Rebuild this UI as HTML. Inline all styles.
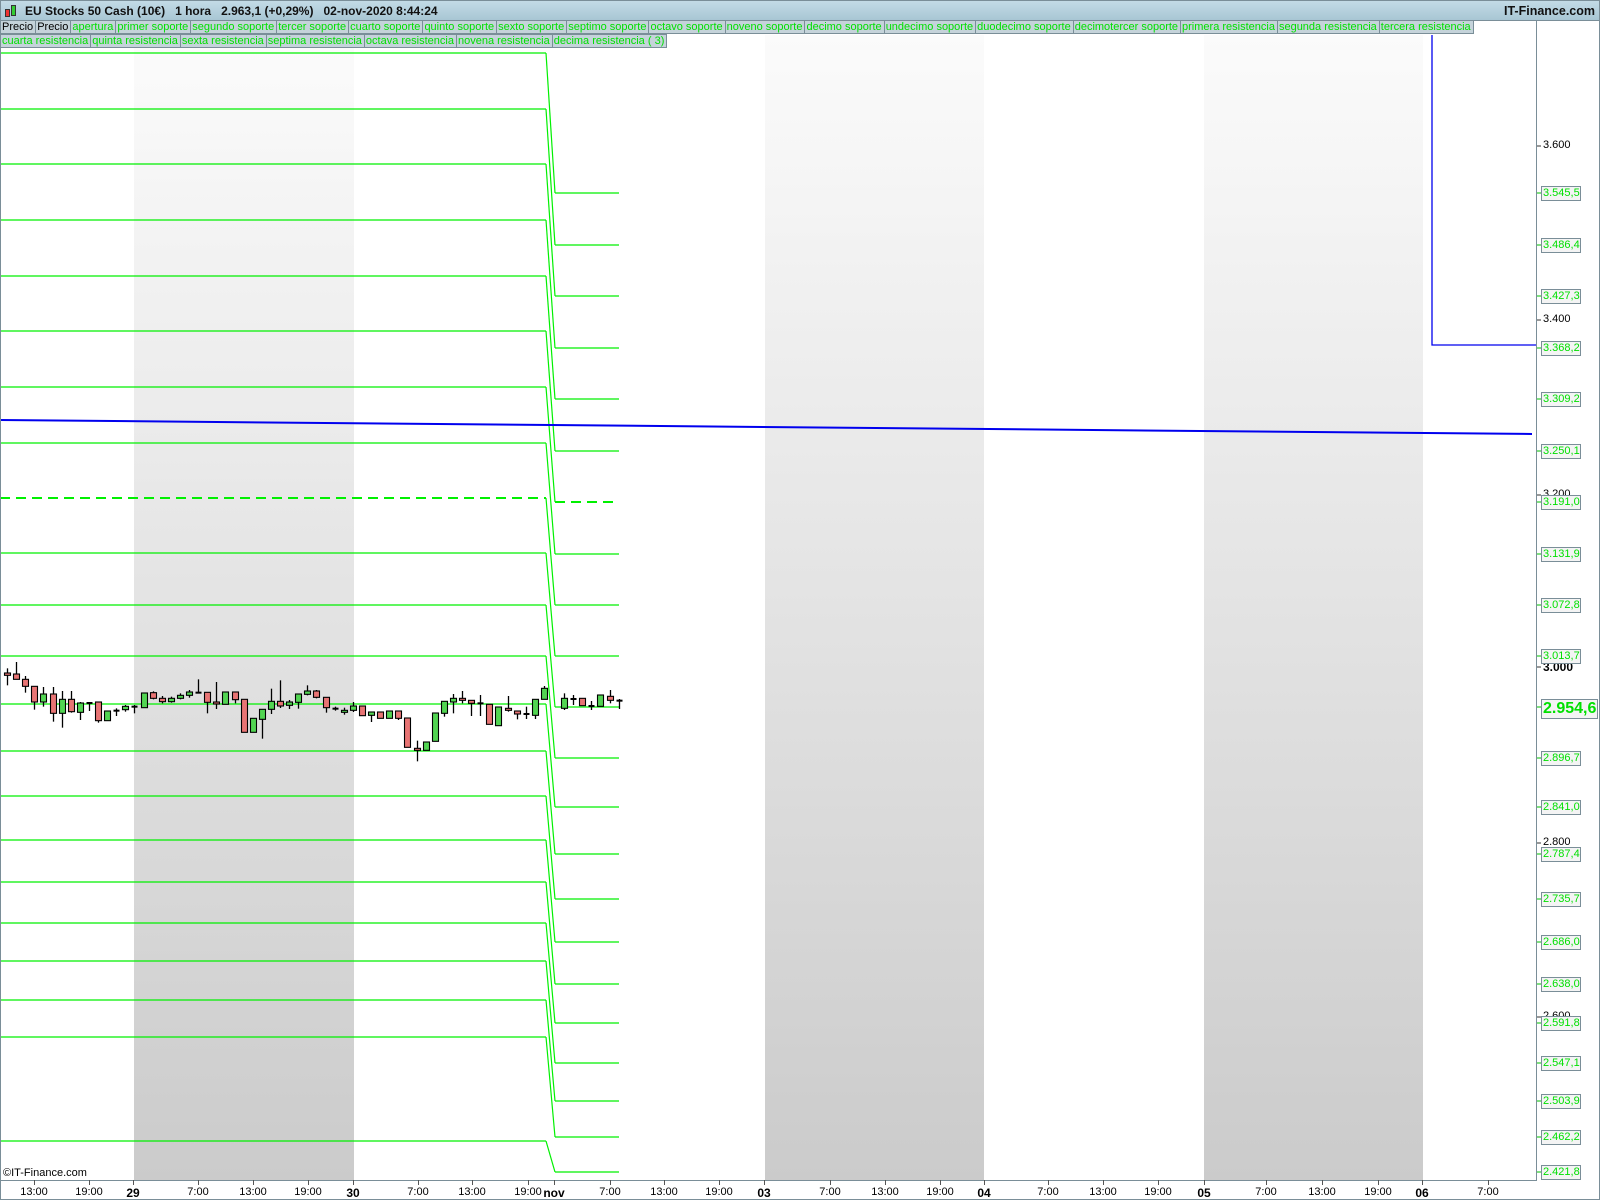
<!DOCTYPE html>
<html><head><meta charset="utf-8"><style>
*{margin:0;padding:0;box-sizing:border-box}
body{width:1600px;height:1200px;overflow:hidden;background:#fff;font-family:"Liberation Sans",sans-serif;position:relative}
#hdr{position:absolute;left:0;top:0;width:1600px;height:21px;background:linear-gradient(#c3dbe6,#a8c6d4);border:1px solid #7a8e98;font-weight:bold;font-size:12px;line-height:19px;color:#111}
#hdr .t{position:absolute;left:24px;top:1px;white-space:pre}
#hdr .r{position:absolute;right:4px;top:1px;font-size:12.5px}
.row{position:absolute;left:0;display:flex;height:14px}
.row span{display:block;border:1px solid #7a8e98;background:#c5d3da;color:#00e000;font-size:11px;line-height:12px;padding:0 2px 0 1px;margin-right:-1px;white-space:nowrap}
.row span.k{color:#000}
.lab{position:absolute;left:1541px;width:40px;height:15px;border:1px solid #7a8e98;background:#f4f4f4;color:#00e000;font-size:11px;line-height:13px;padding-left:1px}
.tk{position:absolute;left:1543px;font-size:11px;color:#000}
.xl{position:absolute;top:1186px;font-size:11px;color:#000;transform:translateX(-50%)}
.xl.b{font-weight:bold;font-size:12px}
</style></head><body>
<svg width="1600" height="1200" style="position:absolute;left:0;top:0">
<defs><linearGradient id="g" x1="0" y1="0" x2="0" y2="1"><stop offset="0" stop-color="#fbfbfb"/><stop offset="1" stop-color="#cbcbcb"/></linearGradient></defs>
<rect x="134" y="48" width="220" height="1132" fill="url(#g)"/>
<rect x="765" y="35" width="219" height="1145" fill="url(#g)"/>
<rect x="1204" y="35" width="219" height="1145" fill="url(#g)"/>
<g id="lv"></g>
<line x1="0" y1="420" x2="1532" y2="434" stroke="#0000ee" stroke-width="2"/>
<polyline points="1432,35 1432,345 1537,345" fill="none" stroke="#0000ee" stroke-width="1.3"/>
<g id="cd"></g>
<line x1="1536.5" y1="21" x2="1536.5" y2="1180" stroke="#7a8e98"/>
<line x1="0" y1="1180.5" x2="1537" y2="1180.5" stroke="#7a8e98"/>
<line x1="0.5" y1="21" x2="0.5" y2="1200" stroke="#7a8e98"/>
<line x1="0" y1="1199.5" x2="1600" y2="1199.5" stroke="#7a8e98"/>
<line x1="1599.5" y1="0" x2="1599.5" y2="1200" stroke="#7a8e98"/>
<g id="tx"></g>
</svg>
<div id="hdr"><span class="t">EU Stocks 50 Cash (10€)   1 hora   2.963,1 (+0,29%)   02-nov-2020 8:44:24</span><span class="r">IT-Finance.com</span>
<svg width="14" height="16" style="position:absolute;left:3px;top:2px"><rect x="1.5" y="6.5" width="4" height="7" fill="#e33" stroke="#333"/><rect x="7.5" y="2.5" width="4" height="10" fill="#3c3" stroke="#333"/></svg></div>
<div class="row" style="top:20px"><span class="k">Precio</span><span class="k">Precio</span><span>apertura</span><span>primer soporte</span><span>segundo soporte</span><span>tercer soporte</span><span>cuarto soporte</span><span>quinto soporte</span><span>sexto soporte</span><span>septimo soporte</span><span>octavo soporte</span><span>noveno soporte</span><span>decimo soporte</span><span>undecimo soporte</span><span>duodecimo soporte</span><span>decimotercer soporte</span><span>primera resistencia</span><span>segunda resistencia</span><span>tercera resistencia</span></div>
<div class="row" style="top:34px"><span>cuarta resistencia</span><span>quinta resistencia</span><span>sexta resistencia</span><span>septima resistencia</span><span>octava resistencia</span><span>novena resistencia</span><span>decima resistencia ( 3)</span></div>
<div class="tk" style="top:139px">3.600</div>
<div class="tk" style="top:313px">3.400</div>
<div class="tk" style="top:488px">3.200</div>
<div class="tk" style="top:660px;font-weight:bold;font-size:12px">3.000</div>
<div class="tk" style="top:836px">2.800</div>
<div class="tk" style="top:1010px">2.600</div>
<div id="labs"></div>
<div class="lab" style="top:699px;width:57px;height:20px;font-size:16px;font-weight:bold;line-height:18px">2.954,6</div>
<div style="position:absolute;left:3px;top:1167px;font-size:11px">©IT-Finance.com</div>
<div id="xls"></div>
<script>
var L=[53,109,164,220,276,331,387,443,498,553,605,656,704,751,796,840,882,923,961,1000,1037,1141];
var R=[193,245,296,348,399,451,502,554,605,656,707,758,807,854,899,942,984,1023,1063,1101,1137,1172];
var V=["3.545,5","3.486,4","3.427,3","3.368,2","3.309,2","3.250,1","3.191,0","3.131,9","3.072,8","3.013,7",null,"2.896,7","2.841,0","2.787,4","2.735,7","2.686,0","2.638,0","2.591,8","2.547,1","2.503,9","2.462,2","2.421,8"];
var s='',lb='',tk='';
for(var i=0;i<L.length;i++){
var dl=(i==8)?' stroke-dasharray="10,6" stroke-width="2"':' stroke-width="1.2"';
var dr=(i==6)?' stroke-dasharray="10,6" stroke-width="2"':' stroke-width="1.2"';
s+='<line x1="0" y1="'+L[i]+'" x2="546" y2="'+L[i]+'" stroke="#00f000"'+dl+'/>';
s+='<line x1="546" y1="'+L[i]+'" x2="555" y2="'+R[i]+'" stroke="#00f000" stroke-width="1.2"/>';
s+='<line x1="555" y1="'+R[i]+'" x2="619" y2="'+R[i]+'" stroke="#00f000"'+dr+'/>';
if(V[i]){lb+='<div class="lab" style="top:'+(R[i]-7)+'px">'+V[i]+'</div>';}
tk+='<line x1="1537" y1="'+R[i]+'" x2="1541" y2="'+R[i]+'" stroke="#00c000"/>';}
[146,320,495,667,843,1017].forEach(function(y){tk+='<line x1="1537" y1="'+y+'" x2="1541" y2="'+y+'" stroke="#333"/>';});
document.getElementById('lv').innerHTML=s;document.getElementById('labs').innerHTML=lb;
var C=[['r',99,106,85,136],['r',102,118,66,118],['r',118,139,108,158],['r',139,186,139,209],['g',162,186,141,200],['r',162,220,141,245],['g',178,220,153,263],['r',178,215,153,218],['g',189,217,186,240],['k',189,189,186,213],['r',186,242,186,248],['g',213,242,213,242],['k',212,212,205,228],['g',199,209,195,215],['k',200,200,195,220],['g',159,203,159,203],['r',158,175,154,178],['r',175,185,168,190],['g',175,185,170,188],['g',166,175,160,178],['g',156,166,150,173],['k',158,158,118,160],['r',157,187,157,220],['r',186,190,126,207],['g',156,193,156,193],['r',156,179,156,190],['r',178,277,178,277],['g',235,277,235,277],['g',208,238,208,296],['g',184,208,146,222],['r',184,198,121,204],['g',186,196,180,207],['g',162,187,162,206],['g',153,163,136,166],['r',153,172,150,175],['r',172,203,172,218],['k',206,206,200,212],['g',211,216,203,224],['g',198,211,186,216],['r',198,227,198,227],['g',216,226,216,246],['r',216,235,216,235],['g',213,235,213,235],['r',213,235,213,240],['r',234,322,234,322],['r',325,331,302,364],['g',306,331,306,331],['g',219,304,219,304],['g',184,220,184,230],['g',175,186,162,220],['r',175,181,153,190],['r',181,190,181,228],['k',190,190,165,228],['r',193,253,193,253],['g',201,257,201,257],['r',205,210,168,215],['r',213,222,213,238],['k',222,222,200,237],['g',178,226,178,237],['g',145,178,138,178]];
var P=[['g',175,205,160,210],['k',177,177,165,195],['r',175,197,175,197],['k',198,198,183,210],['g',165,199,165,199],['r',169,181,150,190],['k',182,182,177,207]];
var col={r:'#e87474',g:'#52d452',k:'#000'};var cs='';
function cd(x,c){var y=function(v){return 640+v/3};var bt=y(c[1]),bb=y(c[2]);
cs+='<line x1="'+x+'" y1="'+y(c[3])+'" x2="'+x+'" y2="'+y(c[4])+'" stroke="#000" stroke-width="1.3"/>';
if(c[0]=='k'){cs+='<rect x="'+(x-3)+'" y="'+(bt-1)+'" width="6" height="2" fill="#000"/>';}
else cs+='<rect x="'+(x-3)+'" y="'+bt+'" width="6" height="'+Math.max(2,bb-bt)+'" fill="'+col[c[0]]+'" stroke="#000" stroke-width="1.1"/>';}
C.forEach(function(c,i){cd(Math.round(7+i*9.1)+.5,c)});
P.forEach(function(c,i){cd(Math.round(564+i*9.1)+.5,c)});
document.getElementById('cd').innerHTML=cs;
var X=[[34,'13:00'],[89,'19:00'],[133,'29',1],[198,'7:00'],[253,'13:00'],[308,'19:00'],[353,'30',1],[418,'7:00'],[472,'13:00'],[528,'19:00'],[554,'nov',1],[610,'7:00'],[664,'13:00'],[719,'19:00'],[764,'03',1],[830,'7:00'],[885,'13:00'],[940,'19:00'],[984,'04',1],[1048,'7:00'],[1103,'13:00'],[1158,'19:00'],[1204,'05',1],[1266,'7:00'],[1322,'13:00'],[1378,'19:00'],[1422,'06',1],[1488,'7:00']];
var xh='';X.forEach(function(a){xh+='<div class="xl'+(a[2]?' b':'')+'" style="left:'+a[0]+'px">'+a[1]+'</div>';tk+='<line x1="'+(a[0]+.5)+'" y1="1180" x2="'+(a[0]+.5)+'" y2="1185" stroke="#555"/>';});
document.getElementById('xls').innerHTML=xh;document.getElementById('tx').innerHTML=tk;
</script>
</body></html>
